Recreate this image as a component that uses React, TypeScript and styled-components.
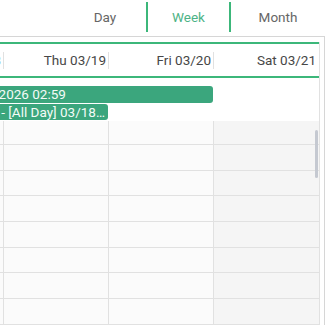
import styled, { createGlobalStyle } from "styled-components";

const GlobalStyle = createGlobalStyle`
  html, body {
    margin: 0;
    padding: 0;
    background: #ffffff;
    font-family: Roboto, "Liberation Sans", sans-serif;
    overflow: hidden;
  }
`;

const GREEN = "#3cb77a";
const EVENT = "#3ba67d";
const LINE = "#e1e1e1";
const COL = 105;

const Page = styled.div`
  width: 330px;
  height: 325px;
  overflow: hidden;
`;

const Tabs = styled.nav`
  display: flex;
  justify-content: flex-end;
  width: 325px;
  height: 30px;
  margin-top: 2px;
  margin-bottom: 4px;
`;

const Tab = styled.div<{ $active?: boolean; $width: number }>`
  display: flex;
  align-items: center;
  justify-content: center;
  width: ${(p) => p.$width}px;
  font-size: 13.5px;
  color: ${(p) => (p.$active ? "#4db386" : "#666666")};
  border-left: ${(p) => (p.$active ? `2px solid ${GREEN}` : "none")};
  border-right: ${(p) => (p.$active ? `2px solid ${GREEN}` : "none")};
`;

const Panel = styled.section`
  width: 325px;
  height: 289px;
  box-sizing: border-box;
  border-top: 1px solid #d6d6d6;
  border-right: 1px solid #d6d6d6;
  padding: 5px 5px 0 0;
`;

const Inner = styled.div`
  width: 320px;
  height: 100%;
  box-sizing: border-box;
  border-right: 1px solid ${LINE};
  overflow: hidden;
  display: flex;
  flex-direction: column;
`;

/* the week is scrolled sideways: Wednesday sits mostly out of view */
const Track = styled.div`
  margin-left: -101px;
  width: ${COL * 4}px;
  display: flex;
  flex-direction: column;
  flex: 1;
  min-height: 0;
`;

const HeaderRow = styled.div`
  display: grid;
  grid-template-columns: repeat(4, ${COL}px);
  height: 32px;
  border-top: 2px solid ${GREEN};
  border-bottom: 2px solid ${GREEN};
`;

const HeaderCell = styled.div`
  display: flex;
  align-items: center;
  justify-content: flex-end;
`;

const HeaderLabel = styled.span<{ $today?: boolean; $last?: boolean }>`
  font-size: 13.5px;
  line-height: 17px;
  color: ${(p) => (p.$today ? "#86b8e2" : "#474747")};
  padding-right: ${(p) => (p.$last ? 3 : 2)}px;
  border-right: ${(p) => (p.$last ? "none" : `1px solid ${LINE}`)};
`;

const AllDay = styled.div`
  display: grid;
  grid-template-columns: repeat(4, ${COL}px);
  row-gap: 1px;
  padding: 8px 0 1px;
`;

const Event = styled.div<{ $span: number; $height: number }>`
  grid-column: 1 / span ${(p) => p.$span};
  height: ${(p) => p.$height}px;
  margin-right: 1px;
  background: ${EVENT};
  border-radius: 3px;
  color: #f4fbf7;
  font-size: 13.5px;
  line-height: ${(p) => p.$height}px;
  padding-left: 12px;
  white-space: nowrap;
  overflow: hidden;
  text-overflow: ellipsis;
`;

const Body = styled.div`
  position: relative;
  flex: 1;
  overflow: hidden;
`;

const Columns = styled.div`
  display: grid;
  grid-template-columns: repeat(4, ${COL}px);
  margin-top: -1.7px;
`;

const DayColumn = styled.div<{ $weekend?: boolean; $last?: boolean }>`
  background: ${(p) => (p.$weekend ? "#f5f5f5" : "#fbfbfb")};
  border-right: ${(p) => (p.$last ? "none" : `1px solid ${LINE}`)};
`;

const Slot = styled.div`
  height: 25.7px;
  box-sizing: border-box;
  border-bottom: 1px solid ${LINE};
`;

const ScrollThumb = styled.div`
  position: absolute;
  top: 9px;
  right: 1px;
  width: 3px;
  height: 48px;
  border-radius: 2px;
  background: #c5c9d1;
`;

const days = [
  { label: "Wed 03/18", today: true },
  { label: "Thu 03/19" },
  { label: "Fri 03/20" },
  { label: "Sat 03/21", weekend: true },
];

const slots = Array.from({ length: 9 }, (_, i) => i);

export default function App() {
  return (
    <Page>
      <GlobalStyle />
      <Tabs>
        <Tab $width={82}>Day</Tab>
        <Tab $width={81} $active>
          Week
        </Tab>
        <Tab $width={94}>Month</Tab>
      </Tabs>
      <Panel>
        <Inner>
          <Track>
            <HeaderRow>
              {days.map((d, i) => (
                <HeaderCell key={d.label}>
                  <HeaderLabel $today={d.today} $last={i === days.length - 1}>
                    {d.label}
                  </HeaderLabel>
                </HeaderCell>
              ))}
            </HeaderRow>
            <AllDay>
              <Event $span={3} $height={17}>
                Kickoff 03/20/2026 02:59
              </Event>
              <Event $span={2} $height={16}>
                Offices Closed - [All Day] 03/18/2026 - 03/19/2026
              </Event>
            </AllDay>
            <Body>
              <Columns>
                {days.map((d, i) => (
                  <DayColumn key={d.label} $weekend={d.weekend} $last={i === days.length - 1}>
                    {slots.map((s) => (
                      <Slot key={s} />
                    ))}
                  </DayColumn>
                ))}
              </Columns>
              <ScrollThumb />
            </Body>
          </Track>
        </Inner>
      </Panel>
    </Page>
  );
}
